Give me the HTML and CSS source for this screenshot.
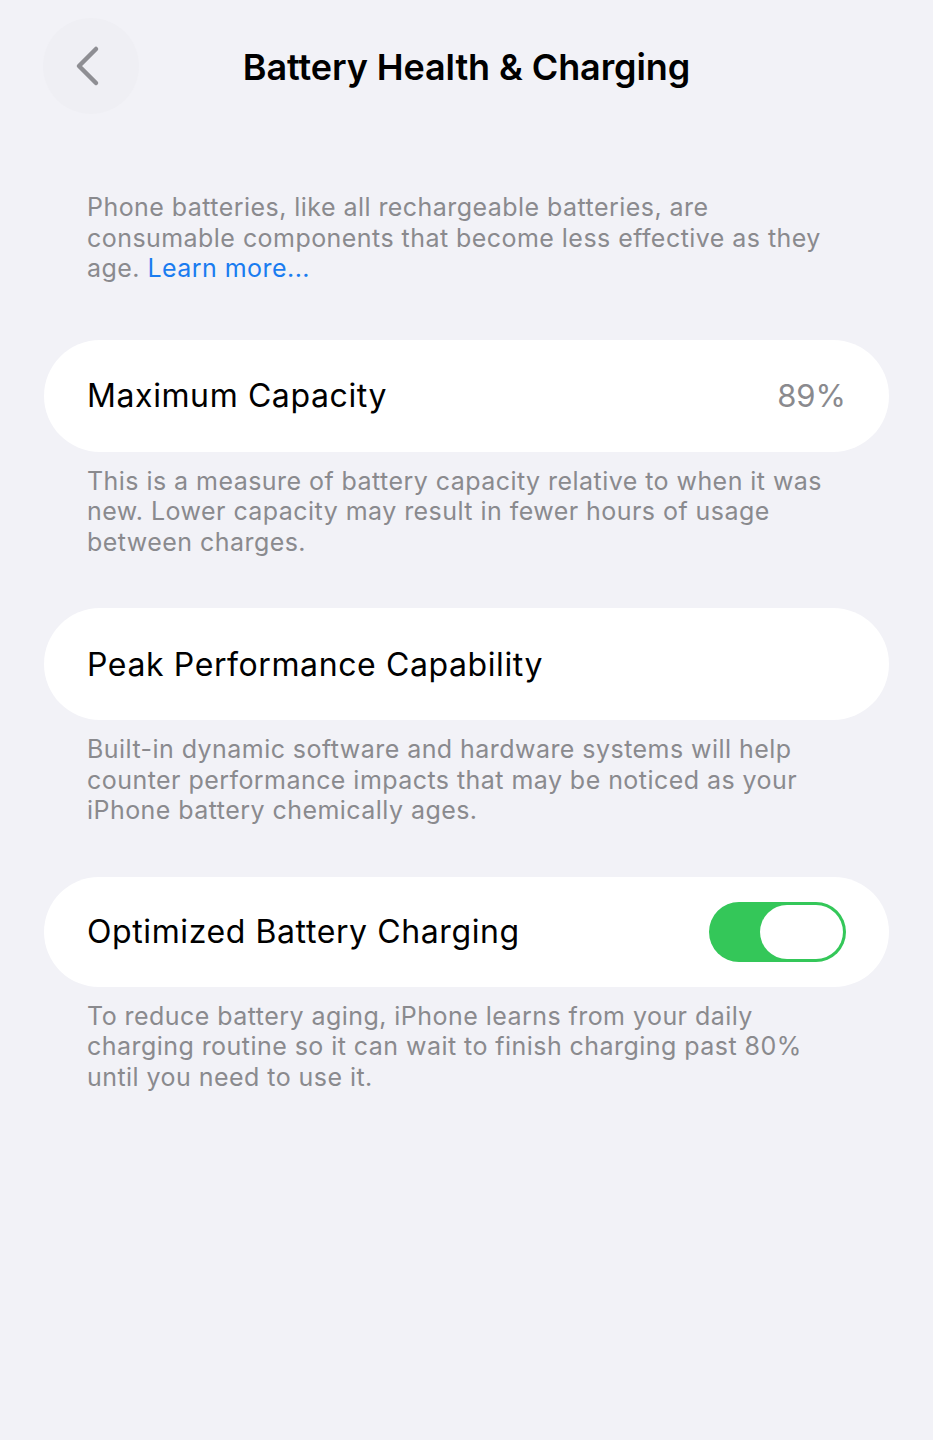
FILE: index.html
```html
<!DOCTYPE html>
<html lang="en">
<head>
    <meta charset="UTF-8">
    <meta name="viewport" content="width=device-width, initial-scale=1.0">
    <title>Battery Health &amp; Charging</title>
    <link rel="stylesheet" href="styles.css">
</head>
<body>
    <header class="nav-bar">
        <button class="back-btn" aria-label="Back">
            <svg width="28" height="42" viewBox="0 0 28 42">
                <path d="M22 4 L5 21 L22 38" fill="none" stroke="#8e8e93" stroke-width="4.5" stroke-linecap="round" stroke-linejoin="round"/>
            </svg>
        </button>
        <h1 class="nav-title">Battery Health &amp; Charging</h1>
    </header>

    <main class="content">
        <p class="intro">
            Phone batteries, like all rechargeable batteries, are consumable components that become less effective as they age. <a href="#" class="link">Learn more...</a>
        </p>

        <section class="group">
            <div class="cell">
                <span class="cell-label">Maximum Capacity</span>
                <span class="cell-value">89%</span>
            </div>
            <p class="footnote">This is a measure of battery capacity relative to when it was new. Lower capacity may result in fewer hours of usage between charges.</p>
        </section>

        <section class="group">
            <div class="cell">
                <span class="cell-label">Peak Performance Capability</span>
            </div>
            <p class="footnote">Built-in dynamic software and hardware systems will help counter performance impacts that may be noticed as your iPhone battery chemically ages.</p>
        </section>

        <section class="group">
            <div class="cell">
                <span class="cell-label">Optimized Battery Charging</span>
                <span class="switch on"><span class="knob"></span></span>
            </div>
            <p class="footnote">To reduce battery aging, iPhone learns from your daily charging routine so it can wait to finish charging past 80% until you need to use it.</p>
        </section>
    </main>
</body>
</html>
```

FILE: styles.css
```css
:root {
    --bg: #f2f2f7;
    --label: #000000;
    --secondary: #8a8a8e;
    --blue: #1a7cf0;
    --green: #34c759;
}

body {
    margin: 0;
    background: var(--bg);
    font-family: Inter, "Liberation Sans", sans-serif;
    color: var(--label);
}

.nav-bar {
    display: flex;
    align-items: center;
    justify-content: center;
    height: 134px;
    position: relative;
}

.back-btn {
    position: absolute;
    left: 43px;
    top: 18px;
    width: 96px;
    height: 96px;
    border: none;
    border-radius: 50%;
    background: #efeff4;
    display: flex;
    align-items: center;
    justify-content: center;
    padding: 0 6px 0 0;
}

.nav-title {
    margin: 0;
    font-size: 36px;
    font-weight: 600;
    letter-spacing: -0.1px;
}

.content {
    padding: 58px 44px 0;
}

.intro,
.footnote {
    margin: 0;
    padding: 0 43px;
    font-size: 25px;
    line-height: 30.5px;
    letter-spacing: 0.45px;
    color: var(--secondary);
}

.link {
    color: var(--blue);
    text-decoration: none;
}

.group {
    margin-top: 56px;
}

.group + .group {
    margin-top: 51px;
}

.cell {
    display: flex;
    align-items: center;
    justify-content: space-between;
    height: 112px;
    padding: 0 43px;
    background: #ffffff;
    border-radius: 56px;
}

.group:last-child .cell {
    height: 110px;
}

.cell-label {
    font-size: 32px;
    letter-spacing: 0.6px;
}

.cell-value {
    font-size: 31px;
    color: var(--secondary);
}

.footnote {
    margin-top: 14px;
}

.switch {
    width: 137px;
    height: 60px;
    border-radius: 30px;
    background: var(--green);
    display: flex;
    align-items: center;
    justify-content: flex-end;
    padding: 3px;
    box-sizing: border-box;
}

.knob {
    width: 83px;
    height: 54px;
    border-radius: 27px;
    background: #ffffff;
}
```
